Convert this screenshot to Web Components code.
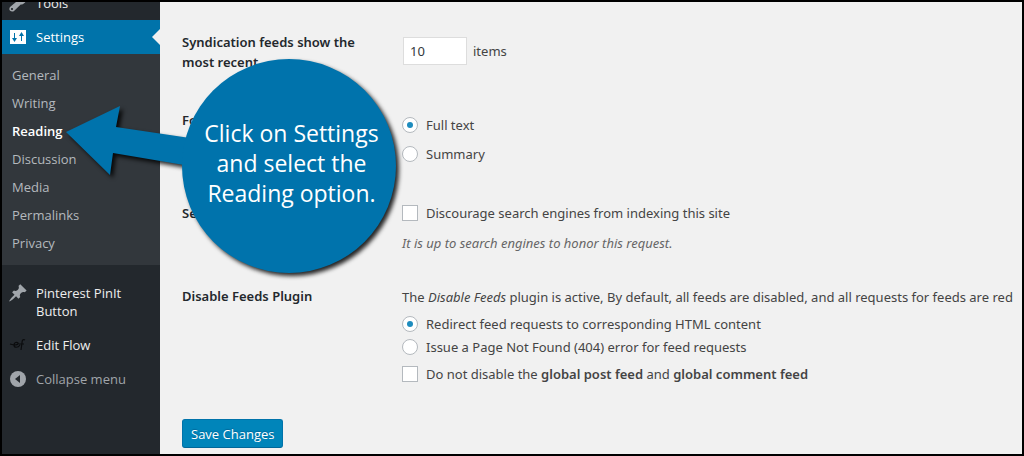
<!DOCTYPE html>
<html lang="en">
<head>
<meta charset="utf-8">
<meta name="viewport" content="width=device-width, initial-scale=1">
<title>Reading Settings</title>
<style>
html, body { margin: 0; height: 100%; }
body { font-family: "Open Sans", "Noto Sans", sans-serif; font-size: 13px; line-height: 18px; color: #444; background: #f1f1f1; }
</style>
</head>
<body>
<admin-page></admin-page>
<script>
function define(name, html) {
  const template = document.createElement('template');
  template.innerHTML = html;
  customElements.define(name, class extends HTMLElement {
    constructor() {
      super();
      this.attachShadow({ mode: 'open' }).append(template.content.cloneNode(true));
    }
  });
}

define('menu-item', `
<style>
:host { display: block; color: #eee; }
a { display: flex; align-items: flex-start; gap: 8px; padding: 8px 8px 8px 6px; color: inherit; text-decoration: none; position: relative; }
.icon { flex: 0 0 20px; height: 18px; display: flex; align-items: center; justify-content: center; color: #a0a5aa; }
:host([current]) { background: #0073aa; color: #fff; }
:host([current]) .icon { color: #fff; }
:host([current]) a::after { content: ""; position: absolute; right: 0; top: 9px; border: 8px solid transparent; border-right-color: #f1f1f1; border-left: 0; }
:host([muted]) { color: #a0a5aa; }
</style>
<a href="#"><span class="icon"><slot name="icon"></slot></span><span><slot></slot></span></a>`);

define('submenu-list', `
<style>
:host { display: block; background: #32373c; padding: 7px 0 8px; }
nav { display: flex; flex-direction: column; }
a { padding: 5px 10px; color: #b4b9be; text-decoration: none; }
a.current { color: #fff; font-weight: 600; }
</style>
<nav aria-label="Settings">
<a href="#">General</a><a href="#">Writing</a><a href="#" class="current" aria-current="page">Reading</a><a href="#">Discussion</a><a href="#">Media</a><a href="#">Permalinks</a><a href="#">Privacy</a>
</nav>`);

define('admin-menu', `
<style>
:host { display: block; flex: 0 0 158px; background: #23282d; overflow: hidden; }
.first { margin-top: -16px; }
submenu-list { margin-bottom: 11px; }
svg { display: block; }
</style>
<menu-item class="first"><svg slot="icon" width="20" height="20" viewBox="0 0 20 20" fill="currentColor"><path d="M16.7 9.8c-1.2 1.3-2.600 1.900-4 1.700L6.300 17.700c-1.200 1.200-3.100 1.200-4.200.1s-1-2.900.2-4.100L9.200 8c-.6-1.600-.2-3.400 1.100-4.600 1.200-1.200 3-1.500 4.500-1l-2.700 2.700.6 2.300 2.300.6 2.700-2.700c.5 1.500.2 3.300-1 4.500zM4 17c.6 0 1-.4 1-1s-.4-1-1-1-1 .4-1 1 .4 1 1 1z"/></svg>Tools</menu-item>
<menu-item current><svg slot="icon" width="20" height="20" viewBox="0 0 20 20"><path fill="currentColor" d="M2 3h16v14H2z"/><path fill="#0073aa" d="M6 6h1v5h2l-2.500 4L4 11h2zM13 14V9h-2l2.500-4L16 9h-2v5z"/></svg>Settings</menu-item>
<submenu-list></submenu-list>
<menu-item><svg slot="icon" width="20" height="20" viewBox="0 0 20 20" fill="currentColor"><path d="M10.440 3.020l1.820-1.820 6.360 6.350-1.830 1.820c-1.050-.68-2.480-.57-3.410.36l-.75.750c-.92.930-1.040 2.350-.350 3.410l-1.830 1.820-2.410-2.410-2.800 2.790c-.42.420-3.380 2.710-3.800 2.290s1.860-3.390 2.280-3.810l2.790-2.790L4.100 9.360l1.830-1.820c1.050.69 2.480.57 3.400-.36l.75-.75c.93-.92 1.050-2.350.360-3.410z"/></svg>Pinterest PinIt Button</menu-item>
<menu-item><svg slot="icon" width="20" height="20" viewBox="0 0 20 20" fill="none" stroke="#0b0c0e" stroke-width="1.200"><path d="M2 9l4 1c3 0 5-1 4-2s-4-1-4 2c0 3 4 3 6 0M11 9h5M17 5c-2-1-3 0-3 3l-1 7"/></svg>Edit Flow</menu-item>
<menu-item muted><svg slot="icon" width="20" height="20" viewBox="0 0 20 20"><circle cx="10" cy="10" r="8" fill="currentColor"/><path d="M12 6v8l-5-4z" fill="#23282d"/></svg>Collapse menu</menu-item>`);

define('form-row', `
<style>
:host { display: flex; gap: 20px; }
.label { flex: 0 0 200px; font-weight: 600; line-height: 20px; color: #23282d; }
.field { flex: 1; min-width: 0; }
</style>
<div class="label"><slot name="label"></slot></div><div class="field"><slot></slot></div>`);

define('reading-form', `
<style>
:host { display: block; flex: 1; min-width: 0; overflow: hidden; font-family: "Noto Sans", "Open Sans", sans-serif; }
form { display: flex; flex-direction: column; align-items: stretch; padding: 30px 0 6px 22px; }
form-row { min-height: 78px; }
.feed { min-height: 93px; } .search { min-height: 83px; } .plugin { min-height: 133px; }
label.choice { display: flex; align-items: center; gap: 8px; line-height: 18px; }
.stack { display: flex; flex-direction: column; }
.feed .stack { gap: 11px; padding-top: 6px; }
.search .stack { gap: 12px; padding-top: 1px; }
.plugin .stack { gap: 5px; padding-top: 2px; }
.plugin .stack .last { margin-top: 4px; }
.plugin p { padding-bottom: 4px; }
p { margin: 0; white-space: nowrap; }
b { font-weight: 600; }
.hint { font-style: italic; color: #666; }
input { font: inherit; color: #32373c; box-sizing: border-box; margin: 0; background: #fff; border: 1px solid #b4b9be; }
input[type=radio], input[type=checkbox] { appearance: none; width: 16px; height: 16px; flex: none; }
input[type=radio] { border-radius: 50%; display: grid; place-items: center; }
input[type=radio]:checked::before { content: ""; width: 6px; height: 6px; border-radius: 50%; background: #1e8cbe; }
.number { display: flex; align-items: center; gap: 6px; padding: 5px 0 0 1px; }
.number input { width: 64px; height: 28px; padding: 0 6px; border-color: #ddd; }
button { align-self: flex-start; font: inherit; font-family: "Open Sans", sans-serif; color: #fff; height: 29px; padding: 0 8px; background: #0085ba; border: 1px solid #0073aa; border-bottom-color: #006799; border-radius: 3px; text-shadow: 0 -1px 1px #006799; }
</style>
<form>
<form-row><label slot="label" for="count">Syndication feeds show the most recent</label>
<div class="number"><input id="count" type="text" inputmode="numeric" value="10"><label for="count">items</label></div></form-row>
<form-row class="feed"><span slot="label">For each article in a feed, show</span>
<div class="stack" role="group" aria-label="Feed content"><label class="choice"><input type="radio" name="feed" checked><span>Full text</span></label><label class="choice"><input type="radio" name="feed"><span>Summary</span></label></div></form-row>
<form-row class="search"><span slot="label">Search Engine Visibility</span>
<div class="stack"><label class="choice"><input type="checkbox"><span>Discourage search engines from indexing this site</span></label><p class="hint">It is up to search engines to honor this request.</p></div></form-row>
<form-row class="plugin"><span slot="label">Disable Feeds Plugin</span>
<div class="stack"><p>The <em>Disable Feeds</em> plugin is active, By default, all feeds are disabled, and all requests for feeds are red</p>
<label class="choice"><input type="radio" name="disable" checked><span>Redirect feed requests to corresponding HTML content</span></label>
<label class="choice"><input type="radio" name="disable"><span>Issue a Page Not Found (404) error for feed requests</span></label>
<label class="choice last"><input type="checkbox"><span>Do not disable the <b>global post feed</b> and <b>global comment feed</b></span></label></div></form-row>
<button type="button">Save Changes</button>
</form>`);

define('callout-bubble', `
<style>
:host { position: absolute; left: 62px; top: 55px; width: 333px; height: 217px; pointer-events: none; display: block; }
svg { position: absolute; inset: 0; overflow: visible; filter: drop-shadow(3px 3px 2px rgba(0,0,0,.85)); }
.text { position: absolute; inset: 0 0 0 122px; box-sizing: border-box; padding-top: 61px; text-align: center; font-size: 23px; line-height: 30px; color: #fff; white-space: nowrap; }
</style>
<svg width="333" height="217" viewBox="64 57 333 217" fill="#0073ac"><path d="M66 132L120 106L116 127L190 138V166L113 153L110 175Z"/><circle cx="289" cy="166" r="107"/></svg>
<div class="text"><slot></slot></div>`);

define('admin-page', `
<style>
:host { display: flex; position: relative; box-sizing: border-box; min-height: 100vh; border: 2px solid #000; overflow: hidden; background: #f1f1f1; }
</style>
<admin-menu></admin-menu><reading-form></reading-form>
<callout-bubble>Click on Settings<br>and select the<br>Reading option.</callout-bubble>`);
</script>
</body>
</html>
